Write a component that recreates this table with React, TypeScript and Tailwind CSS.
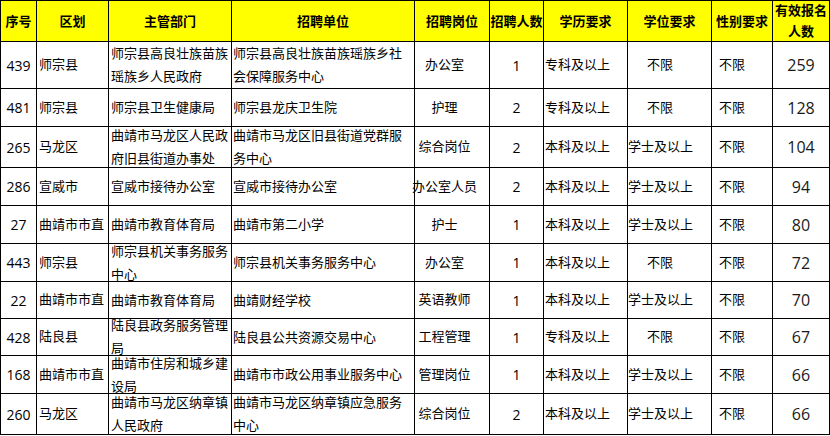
const headers = [
  ["序号"],
  ["区划"],
  ["主管部门"],
  ["招聘单位"],
  ["招聘岗位"],
  ["招聘人数"],
  ["学历要求"],
  ["学位要求"],
  ["性别要求"],
  ["有效报名", "人数"],
];

type Row = {
  id: string;
  area: string;
  dept: string[];
  unit: string[];
  post: string;
  count: string;
  edu: string;
  degree: string;
  gender: string;
  applicants: string;
};

const rows: Row[] = [
  { id: "439", area: "师宗县", dept: ["师宗县高良壮族苗族", "瑶族乡人民政府"], unit: ["师宗县高良壮族苗族瑶族乡社", "会保障服务中心"], post: "办公室", count: "1", edu: "专科及以上", degree: "不限", gender: "不限", applicants: "259" },
  { id: "481", area: "师宗县", dept: ["师宗县卫生健康局"], unit: ["师宗县龙庆卫生院"], post: "护理", count: "2", edu: "专科及以上", degree: "不限", gender: "不限", applicants: "128" },
  { id: "265", area: "马龙区", dept: ["曲靖市马龙区人民政", "府旧县街道办事处"], unit: ["曲靖市马龙区旧县街道党群服", "务中心"], post: "综合岗位", count: "2", edu: "本科及以上", degree: "学士及以上", gender: "不限", applicants: "104" },
  { id: "286", area: "宣威市", dept: ["宣威市接待办公室"], unit: ["宣威市接待办公室"], post: "办公室人员", count: "2", edu: "本科及以上", degree: "学士及以上", gender: "不限", applicants: "94" },
  { id: "27", area: "曲靖市市直", dept: ["曲靖市教育体育局"], unit: ["曲靖市第二小学"], post: "护士", count: "1", edu: "本科及以上", degree: "学士及以上", gender: "不限", applicants: "80" },
  { id: "443", area: "师宗县", dept: ["师宗县机关事务服务", "中心"], unit: ["师宗县机关事务服务中心"], post: "办公室", count: "1", edu: "本科及以上", degree: "不限", gender: "不限", applicants: "72" },
  { id: "22", area: "曲靖市市直", dept: ["曲靖市教育体育局"], unit: ["曲靖财经学校"], post: "英语教师", count: "1", edu: "本科及以上", degree: "学士及以上", gender: "不限", applicants: "70" },
  { id: "428", area: "陆良县", dept: ["陆良县政务服务管理", "局"], unit: ["陆良县公共资源交易中心"], post: "工程管理", count: "1", edu: "专科及以上", degree: "不限", gender: "不限", applicants: "67" },
  { id: "168", area: "曲靖市市直", dept: ["曲靖市住房和城乡建", "设局"], unit: ["曲靖市市政公用事业服务中心"], post: "管理岗位", count: "1", edu: "本科及以上", degree: "学士及以上", gender: "不限", applicants: "66" },
  { id: "260", area: "马龙区", dept: ["曲靖市马龙区纳章镇", "人民政府"], unit: ["曲靖市马龙区纳章镇应急服务", "中心"], post: "综合岗位", count: "2", edu: "本科及以上", degree: "学士及以上", gender: "不限", applicants: "66" },
];

const cell = "flex items-center border-r border-b border-black overflow-hidden whitespace-nowrap";

function Lines({ lines }: { lines: string[] }) {
  return (
    <div className="flex flex-col leading-[23px]">
      {lines.map((l) => (
        <span key={l}>{l}</span>
      ))}
    </div>
  );
}

export default function App() {
  return (
    <div className="w-[830px] h-[436px] bg-white text-black font-['Open_Sans','Noto_Sans_CJK_SC',sans-serif]">
      <div className="grid grid-cols-[36px_72px_123px_183px_75px_54px_84px_84px_61px_57px] grid-rows-[41px_47px_38px_41px_38px_38px_38px_37px_37px_38px_41px] border-t border-l border-black w-[830px] text-[13px]">
        {headers.map((h, i) => (
          <div key={i} className={cell + " justify-center bg-[#ffff00] font-bold"}>
            <div className="flex flex-col items-center leading-[21px]">
              {h.map((t) => (
                <span key={t}>{t}</span>
              ))}
            </div>
          </div>
        ))}
        {rows.map((r) => (
          <div key={r.id} className="contents">
            <div className={cell + " justify-center text-[14px]"}>{r.id}</div>
            <div className={cell + " pl-[2px]"}>{r.area}</div>
            <div className={cell + " pl-[2px]"}>
              <Lines lines={r.dept} />
            </div>
            <div className={cell + " pl-[1px]"}>
              <Lines lines={r.unit} />
            </div>
            <div className="flex items-center justify-center pr-[15px] border-r border-b border-black whitespace-nowrap">
              {r.post}
            </div>
            <div className={cell + " justify-center text-[14px]"}>{r.count}</div>
            <div className={cell + " pl-[1px]"}>{r.edu}</div>
            <div className={cell + (r.degree === "不限" ? " pl-[19px]" : " pl-0")}>{r.degree}</div>
            <div className={cell + " pl-[7px]"}>{r.gender}</div>
            <div className={cell + " justify-center text-[16px] text-[#1a1a1a]"}>{r.applicants}</div>
          </div>
        ))}
      </div>
    </div>
  );
}
